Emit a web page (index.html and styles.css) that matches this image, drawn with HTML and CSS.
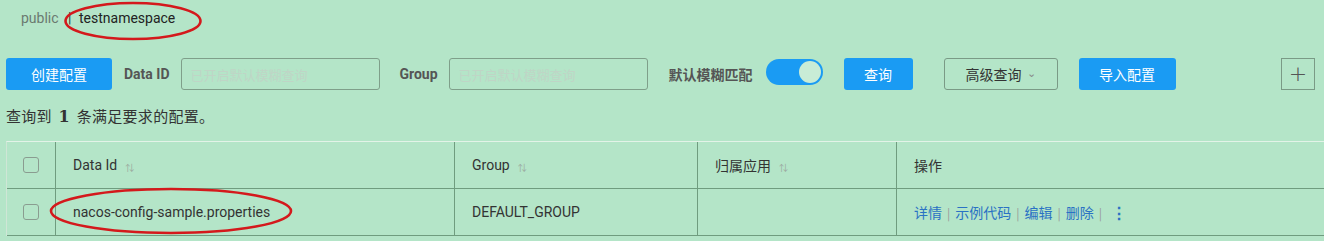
FILE: index.html
```html
<!DOCTYPE html>
<html lang="zh-CN">
<head>
  <meta charset="UTF-8" />
  <title>配置列表</title>
  <link rel="stylesheet" href="styles.css">
</head>
<body>
  <div class="page">
    <div class="breadcrumb">
      <span class="ns-public">public</span>
      <span class="ns-sep">|</span>
      <span class="ns-current">testnamespace</span>
      <svg class="mark mark-ns" width="140" height="40" viewBox="0 0 140 40">
        <ellipse cx="70" cy="20" rx="67.5" ry="18" fill="none" stroke="#d4191c" stroke-width="2.6"/>
      </svg>
    </div>

    <div class="toolbar">
      <button class="btn btn-primary btn-create">创建配置</button>
      <label class="field-label label-dataid">Data ID</label>
      <input class="field-input" type="text" placeholder="已开启默认模糊查询">
      <label class="field-label label-group">Group</label>
      <input class="field-input" type="text" placeholder="已开启默认模糊查询">
      <span class="switch-label">默认模糊匹配</span>
      <span class="switch"><span class="switch-knob"></span></span>
      <button class="btn btn-primary btn-query">查询</button>
      <button class="btn btn-outline btn-advanced">高级查询 <span class="caret">&#8964;</span></button>
      <button class="btn btn-primary btn-import">导入配置</button>
      <button class="btn btn-outline btn-plus">+</button>
    </div>

    <div class="summary">查询到 <b>1</b> 条满足要求的配置。</div>

    <div class="table">
      <div class="row head">
        <div class="cell col-check"><span class="checkbox"></span></div>
        <div class="cell col-id">Data Id <span class="sort">&#8645;</span></div>
        <div class="cell col-group">Group <span class="sort">&#8645;</span></div>
        <div class="cell col-app">归属应用 <span class="sort">&#8645;</span></div>
        <div class="cell col-ops">操作</div>
      </div>
      <div class="row">
        <div class="cell col-check"><span class="checkbox"></span></div>
        <div class="cell col-id">
          nacos-config-sample.properties
          <svg class="mark mark-id" width="246" height="50" viewBox="0 0 246 50">
            <ellipse cx="122" cy="24" rx="120" ry="22" fill="none" stroke="#d4191c" stroke-width="2.6"/>
          </svg>
        </div>
        <div class="cell col-group">DEFAULT_GROUP</div>
        <div class="cell col-app"></div>
        <div class="cell col-ops">
          <a href="#">详情</a><span class="pipe">|</span><a href="#">示例代码</a><span class="pipe">|</span><a href="#">编辑</a><span class="pipe">|</span><a href="#">删除</a><span class="pipe">|</span><span class="more">&#8942;</span>
        </div>
      </div>
    </div>
  </div>
</body>
</html>
```

FILE: styles.css
```css
* {
    margin: 0;
    padding: 0;
    box-sizing: border-box;
}
body {
    background: #b4e5c8;
    font-family: Roboto, "Noto Sans CJK SC", sans-serif;
    font-size: 14px;
    color: #333;
    overflow: hidden;
}
.page {
    padding-left: 6px;
}
.mark {
    position: absolute;
    pointer-events: none;
}

/* breadcrumb */
.breadcrumb {
    position: relative;
    height: 58px;
    padding: 9px 0 0 15px;
    line-height: 18px;
    font-size: 14px;
}
.ns-public {
    color: #6b7a70;
}
.ns-sep {
    color: #333;
    margin: 0 4px 0 6px;
}
.ns-current {
    color: #222;
}
.mark-ns {
    left: 57px;
    top: 1px;
}

/* toolbar */
.toolbar {
    display: flex;
    align-items: center;
    height: 32px;
}
.btn {
    height: 32px;
    border-radius: 3px;
    font-family: "Noto Sans CJK SC", sans-serif;
    font-size: 14px;
    cursor: pointer;
}
.btn-primary {
    background: #1a9bf3;
    color: #fff;
    border: none;
}
.btn-outline {
    background: transparent;
    border: 1px solid #7a9a86;
    color: #333;
}
.btn-create { width: 106px; }
.btn-query { width: 69px; margin-left: 21px; }
.btn-advanced { width: 114px; margin-left: 31px; }
.btn-import { width: 97px; margin-left: 21px; }
.btn-plus {
    width: 34px;
    height: 32px;
    margin-left: auto;
    margin-right: 9px;
    border-radius: 0;
    font-family: "DejaVu Sans", sans-serif;
    font-weight: 200;
    font-size: 22px;
    line-height: 1;
    color: #555;
}
.caret {
    font-size: 11px;
    color: #888;
    margin-left: 2px;
    position: relative;
    top: -3px;
}
.field-label {
    font-weight: bold;
    color: #555;
    font-size: 14px;
}
.label-dataid { margin-left: 12px; margin-right: 11px; }
.label-group { margin-left: 20px; margin-right: 11px; }
.field-input {
    width: 199px;
    height: 32px;
    border: 1px solid #7f9f8a;
    border-radius: 3px;
    background: transparent;
    padding: 0 9px;
    font-family: "Noto Sans CJK SC", sans-serif;
    font-size: 13px;
}
.field-input::placeholder {
    color: #bfd5c6;
}
.switch-label {
    margin-left: 21px;
    font-family: "Noto Sans CJK SC", sans-serif;
    font-weight: bold;
    color: #555;
}
.switch {
    display: flex;
    justify-content: flex-end;
    align-items: center;
    width: 57px;
    height: 26px;
    margin-left: 13px;
    margin-bottom: 5px;
    padding: 0 2px;
    border-radius: 13px;
    background: #1a9bf3;
}
.switch-knob {
    width: 22px;
    height: 22px;
    border-radius: 50%;
    background: #c8ecd6;
}

/* summary */
.summary {
    margin-top: 15px;
    height: 22px;
    line-height: 22px;
    font-family: "Noto Sans CJK SC", sans-serif;
    font-size: 15px;
    letter-spacing: 0.3px;
    color: #333;
}
.summary b {
    font-family: "DejaVu Serif", serif;
    font-size: 16px;
    margin: 0 3px;
}

/* table */
.table {
    margin-top: 14px;
    width: 1330px;
    border-top: 1px solid #e3f3e8;
    border-left: 1px solid #cfe6d6;
}
.row {
    display: flex;
    height: 47px;
    border-bottom: 1px solid #6f9c7f;
}
.cell {
    position: relative;
    display: flex;
    align-items: center;
    padding-left: 17px;
    border-right: 1px solid #6f9c7f;
    font-size: 14px;
    color: #333;
}
.col-check { width: 49px; justify-content: center; padding-left: 0; }
.col-id { width: 399px; }
.col-group { width: 243px; }
.col-app { width: 199px; font-family: "Noto Sans CJK SC", sans-serif; }
.col-ops { flex: 1; border-right: none; font-family: "Noto Sans CJK SC", sans-serif; }
.checkbox {
    width: 16px;
    height: 16px;
    border: 1px solid #8a9c90;
    border-radius: 3px;
}
.sort {
    font-size: 9px;
    color: #9aa89e;
    margin-left: 8px;
    margin-top: 4px;
}
.mark-id {
    left: -7px;
    top: -2px;
}
.col-ops a {
    color: #2a72c4;
    text-decoration: none;
}
.pipe {
    color: #999;
    font-size: 12px;
    margin: 0 5px;
}
.more {
    color: #2a72c4;
    font-weight: bold;
    font-size: 16px;
    margin-left: 4px;
}
```
